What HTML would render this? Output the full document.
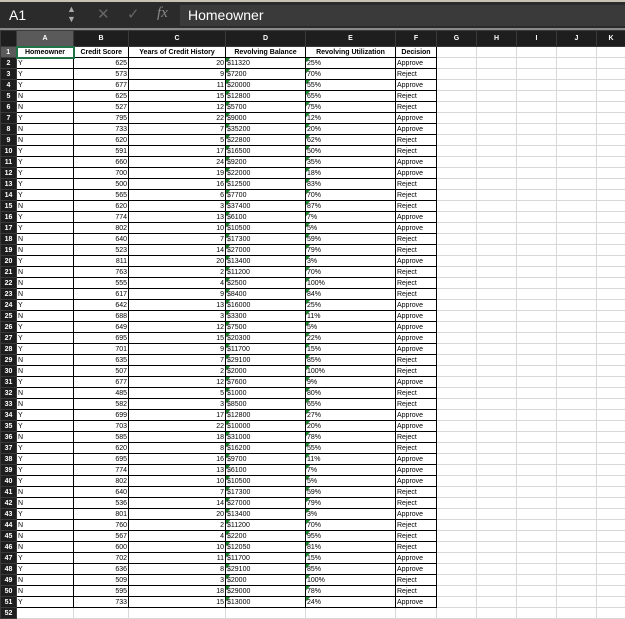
<!DOCTYPE html>
<html><head><meta charset="utf-8"><style>
*{margin:0;padding:0;box-sizing:border-box}
body{width:625px;height:619px;overflow:hidden;background:#fff;font-family:"Liberation Sans",sans-serif;position:relative}
#bar{position:absolute;left:0;top:0;width:625px;height:30px;background:#2b2b2b;border-top:2px solid #c9c3b3;border-bottom:2px solid #8a8a8a}
#nm{position:absolute;left:9px;top:5px;color:#fff;font-size:14px}
#fx{position:absolute;left:180px;top:3px;width:445px;height:21px;background:#3a3a3a;color:#fff;font-size:14px;padding:2px 8px}
.ic{position:absolute;top:3px;color:#666;font-size:15px}
table{position:absolute;left:0;top:30px;border-collapse:collapse;table-layout:fixed;width:625px}
td,th{font-size:7px;line-height:9px;height:11px;padding:0 1px;white-space:nowrap;overflow:hidden;border:1px solid #000;color:#000}
th{background:#1e1e1e;color:#fff;font-weight:bold;text-align:center;border:1px solid #3a3a3a}
tr.h th{height:16px}
td.r{text-align:right}
td.e{border:1px solid #d8d8d8}
td.g{background:linear-gradient(135deg,#1a8a2a 3px,transparent 3px) no-repeat;background-size:5px 5px}
tr.h1 td{text-align:center;font-weight:bold}
</style></head><body>
<div id="bar"><div id="nm">A1</div><div class="ic" style="left:67px;top:2px;font-size:9px;line-height:10px;color:#aaa">▲<br>▼</div><div class="ic" style="left:97px">✕</div><div class="ic" style="left:127px">✓</div><div class="ic" style="left:157px;font-family:'Liberation Serif';font-style:italic;color:#888">fx</div><div id="fx">Homeowner</div></div>
<table>
<colgroup><col style="width:16px"><col style="width:57px"><col style="width:55px"><col style="width:97px"><col style="width:80px"><col style="width:90px"><col style="width:41px"><col style="width:40px"><col style="width:40px"><col style="width:40px"><col style="width:40px"><col style="width:29px"></colgroup>
<tr class="h"><th></th><th style="background:#5a5a5a">A</th><th>B</th><th>C</th><th>D</th><th>E</th><th>F</th><th>G</th><th>H</th><th>I</th><th>J</th><th>K</th></tr>
<tr class="h1"><th style="background:#5a5a5a">1</th><td style="border:2px solid #217346">Homeowner</td><td>Credit Score</td><td>Years of Credit History</td><td>Revolving Balance</td><td>Revolving Utilization</td><td>Decision</td><td class="e"></td><td class="e"></td><td class="e"></td><td class="e"></td><td class="e"></td></tr>
<tr><th>2</th><td>Y</td><td class="r">625</td><td class="r">20</td><td class="g">$11320</td><td class="g">25%</td><td>Approve</td><td class="e"></td><td class="e"></td><td class="e"></td><td class="e"></td><td class="e"></td></tr>
<tr><th>3</th><td>Y</td><td class="r">573</td><td class="r">9</td><td class="g">$7200</td><td class="g">70%</td><td>Reject</td><td class="e"></td><td class="e"></td><td class="e"></td><td class="e"></td><td class="e"></td></tr>
<tr><th>4</th><td>Y</td><td class="r">677</td><td class="r">11</td><td class="g">$20000</td><td class="g">55%</td><td>Approve</td><td class="e"></td><td class="e"></td><td class="e"></td><td class="e"></td><td class="e"></td></tr>
<tr><th>5</th><td>N</td><td class="r">625</td><td class="r">15</td><td class="g">$12800</td><td class="g">65%</td><td>Reject</td><td class="e"></td><td class="e"></td><td class="e"></td><td class="e"></td><td class="e"></td></tr>
<tr><th>6</th><td>N</td><td class="r">527</td><td class="r">12</td><td class="g">$5700</td><td class="g">75%</td><td>Reject</td><td class="e"></td><td class="e"></td><td class="e"></td><td class="e"></td><td class="e"></td></tr>
<tr><th>7</th><td>Y</td><td class="r">795</td><td class="r">22</td><td class="g">$9000</td><td class="g">12%</td><td>Approve</td><td class="e"></td><td class="e"></td><td class="e"></td><td class="e"></td><td class="e"></td></tr>
<tr><th>8</th><td>N</td><td class="r">733</td><td class="r">7</td><td class="g">$35200</td><td class="g">20%</td><td>Approve</td><td class="e"></td><td class="e"></td><td class="e"></td><td class="e"></td><td class="e"></td></tr>
<tr><th>9</th><td>N</td><td class="r">620</td><td class="r">5</td><td class="g">$22800</td><td class="g">62%</td><td>Reject</td><td class="e"></td><td class="e"></td><td class="e"></td><td class="e"></td><td class="e"></td></tr>
<tr><th>10</th><td>Y</td><td class="r">591</td><td class="r">17</td><td class="g">$16500</td><td class="g">50%</td><td>Reject</td><td class="e"></td><td class="e"></td><td class="e"></td><td class="e"></td><td class="e"></td></tr>
<tr><th>11</th><td>Y</td><td class="r">660</td><td class="r">24</td><td class="g">$9200</td><td class="g">35%</td><td>Approve</td><td class="e"></td><td class="e"></td><td class="e"></td><td class="e"></td><td class="e"></td></tr>
<tr><th>12</th><td>Y</td><td class="r">700</td><td class="r">19</td><td class="g">$22000</td><td class="g">18%</td><td>Approve</td><td class="e"></td><td class="e"></td><td class="e"></td><td class="e"></td><td class="e"></td></tr>
<tr><th>13</th><td>Y</td><td class="r">500</td><td class="r">16</td><td class="g">$12500</td><td class="g">83%</td><td>Reject</td><td class="e"></td><td class="e"></td><td class="e"></td><td class="e"></td><td class="e"></td></tr>
<tr><th>14</th><td>Y</td><td class="r">565</td><td class="r">6</td><td class="g">$7700</td><td class="g">70%</td><td>Reject</td><td class="e"></td><td class="e"></td><td class="e"></td><td class="e"></td><td class="e"></td></tr>
<tr><th>15</th><td>N</td><td class="r">620</td><td class="r">3</td><td class="g">$37400</td><td class="g">87%</td><td>Reject</td><td class="e"></td><td class="e"></td><td class="e"></td><td class="e"></td><td class="e"></td></tr>
<tr><th>16</th><td>Y</td><td class="r">774</td><td class="r">13</td><td class="g">$6100</td><td class="g">7%</td><td>Approve</td><td class="e"></td><td class="e"></td><td class="e"></td><td class="e"></td><td class="e"></td></tr>
<tr><th>17</th><td>Y</td><td class="r">802</td><td class="r">10</td><td class="g">$10500</td><td class="g">5%</td><td>Approve</td><td class="e"></td><td class="e"></td><td class="e"></td><td class="e"></td><td class="e"></td></tr>
<tr><th>18</th><td>N</td><td class="r">640</td><td class="r">7</td><td class="g">$17300</td><td class="g">59%</td><td>Reject</td><td class="e"></td><td class="e"></td><td class="e"></td><td class="e"></td><td class="e"></td></tr>
<tr><th>19</th><td>N</td><td class="r">523</td><td class="r">14</td><td class="g">$27000</td><td class="g">79%</td><td>Reject</td><td class="e"></td><td class="e"></td><td class="e"></td><td class="e"></td><td class="e"></td></tr>
<tr><th>20</th><td>Y</td><td class="r">811</td><td class="r">20</td><td class="g">$13400</td><td class="g">3%</td><td>Approve</td><td class="e"></td><td class="e"></td><td class="e"></td><td class="e"></td><td class="e"></td></tr>
<tr><th>21</th><td>N</td><td class="r">763</td><td class="r">2</td><td class="g">$11200</td><td class="g">70%</td><td>Reject</td><td class="e"></td><td class="e"></td><td class="e"></td><td class="e"></td><td class="e"></td></tr>
<tr><th>22</th><td>N</td><td class="r">555</td><td class="r">4</td><td class="g">$2500</td><td class="g">100%</td><td>Reject</td><td class="e"></td><td class="e"></td><td class="e"></td><td class="e"></td><td class="e"></td></tr>
<tr><th>23</th><td>N</td><td class="r">617</td><td class="r">9</td><td class="g">$8400</td><td class="g">84%</td><td>Reject</td><td class="e"></td><td class="e"></td><td class="e"></td><td class="e"></td><td class="e"></td></tr>
<tr><th>24</th><td>Y</td><td class="r">642</td><td class="r">13</td><td class="g">$16000</td><td class="g">25%</td><td>Approve</td><td class="e"></td><td class="e"></td><td class="e"></td><td class="e"></td><td class="e"></td></tr>
<tr><th>25</th><td>N</td><td class="r">688</td><td class="r">3</td><td class="g">$3300</td><td class="g">11%</td><td>Approve</td><td class="e"></td><td class="e"></td><td class="e"></td><td class="e"></td><td class="e"></td></tr>
<tr><th>26</th><td>Y</td><td class="r">649</td><td class="r">12</td><td class="g">$7500</td><td class="g">5%</td><td>Approve</td><td class="e"></td><td class="e"></td><td class="e"></td><td class="e"></td><td class="e"></td></tr>
<tr><th>27</th><td>Y</td><td class="r">695</td><td class="r">15</td><td class="g">$20300</td><td class="g">22%</td><td>Approve</td><td class="e"></td><td class="e"></td><td class="e"></td><td class="e"></td><td class="e"></td></tr>
<tr><th>28</th><td>Y</td><td class="r">701</td><td class="r">9</td><td class="g">$11700</td><td class="g">15%</td><td>Approve</td><td class="e"></td><td class="e"></td><td class="e"></td><td class="e"></td><td class="e"></td></tr>
<tr><th>29</th><td>N</td><td class="r">635</td><td class="r">7</td><td class="g">$29100</td><td class="g">85%</td><td>Reject</td><td class="e"></td><td class="e"></td><td class="e"></td><td class="e"></td><td class="e"></td></tr>
<tr><th>30</th><td>N</td><td class="r">507</td><td class="r">2</td><td class="g">$2000</td><td class="g">100%</td><td>Reject</td><td class="e"></td><td class="e"></td><td class="e"></td><td class="e"></td><td class="e"></td></tr>
<tr><th>31</th><td>Y</td><td class="r">677</td><td class="r">12</td><td class="g">$7600</td><td class="g">9%</td><td>Approve</td><td class="e"></td><td class="e"></td><td class="e"></td><td class="e"></td><td class="e"></td></tr>
<tr><th>32</th><td>N</td><td class="r">485</td><td class="r">5</td><td class="g">$1000</td><td class="g">80%</td><td>Reject</td><td class="e"></td><td class="e"></td><td class="e"></td><td class="e"></td><td class="e"></td></tr>
<tr><th>33</th><td>N</td><td class="r">582</td><td class="r">3</td><td class="g">$8500</td><td class="g">65%</td><td>Reject</td><td class="e"></td><td class="e"></td><td class="e"></td><td class="e"></td><td class="e"></td></tr>
<tr><th>34</th><td>Y</td><td class="r">699</td><td class="r">17</td><td class="g">$12800</td><td class="g">27%</td><td>Approve</td><td class="e"></td><td class="e"></td><td class="e"></td><td class="e"></td><td class="e"></td></tr>
<tr><th>35</th><td>Y</td><td class="r">703</td><td class="r">22</td><td class="g">$10000</td><td class="g">20%</td><td>Approve</td><td class="e"></td><td class="e"></td><td class="e"></td><td class="e"></td><td class="e"></td></tr>
<tr><th>36</th><td>N</td><td class="r">585</td><td class="r">18</td><td class="g">$31000</td><td class="g">78%</td><td>Reject</td><td class="e"></td><td class="e"></td><td class="e"></td><td class="e"></td><td class="e"></td></tr>
<tr><th>37</th><td>Y</td><td class="r">620</td><td class="r">8</td><td class="g">$16200</td><td class="g">55%</td><td>Reject</td><td class="e"></td><td class="e"></td><td class="e"></td><td class="e"></td><td class="e"></td></tr>
<tr><th>38</th><td>Y</td><td class="r">695</td><td class="r">16</td><td class="g">$9700</td><td class="g">11%</td><td>Approve</td><td class="e"></td><td class="e"></td><td class="e"></td><td class="e"></td><td class="e"></td></tr>
<tr><th>39</th><td>Y</td><td class="r">774</td><td class="r">13</td><td class="g">$6100</td><td class="g">7%</td><td>Approve</td><td class="e"></td><td class="e"></td><td class="e"></td><td class="e"></td><td class="e"></td></tr>
<tr><th>40</th><td>Y</td><td class="r">802</td><td class="r">10</td><td class="g">$10500</td><td class="g">5%</td><td>Approve</td><td class="e"></td><td class="e"></td><td class="e"></td><td class="e"></td><td class="e"></td></tr>
<tr><th>41</th><td>N</td><td class="r">640</td><td class="r">7</td><td class="g">$17300</td><td class="g">59%</td><td>Reject</td><td class="e"></td><td class="e"></td><td class="e"></td><td class="e"></td><td class="e"></td></tr>
<tr><th>42</th><td>N</td><td class="r">536</td><td class="r">14</td><td class="g">$27000</td><td class="g">79%</td><td>Reject</td><td class="e"></td><td class="e"></td><td class="e"></td><td class="e"></td><td class="e"></td></tr>
<tr><th>43</th><td>Y</td><td class="r">801</td><td class="r">20</td><td class="g">$13400</td><td class="g">3%</td><td>Approve</td><td class="e"></td><td class="e"></td><td class="e"></td><td class="e"></td><td class="e"></td></tr>
<tr><th>44</th><td>N</td><td class="r">760</td><td class="r">2</td><td class="g">$11200</td><td class="g">70%</td><td>Reject</td><td class="e"></td><td class="e"></td><td class="e"></td><td class="e"></td><td class="e"></td></tr>
<tr><th>45</th><td>N</td><td class="r">567</td><td class="r">4</td><td class="g">$2200</td><td class="g">95%</td><td>Reject</td><td class="e"></td><td class="e"></td><td class="e"></td><td class="e"></td><td class="e"></td></tr>
<tr><th>46</th><td>N</td><td class="r">600</td><td class="r">10</td><td class="g">$12050</td><td class="g">81%</td><td>Reject</td><td class="e"></td><td class="e"></td><td class="e"></td><td class="e"></td><td class="e"></td></tr>
<tr><th>47</th><td>Y</td><td class="r">702</td><td class="r">11</td><td class="g">$11700</td><td class="g">15%</td><td>Approve</td><td class="e"></td><td class="e"></td><td class="e"></td><td class="e"></td><td class="e"></td></tr>
<tr><th>48</th><td>Y</td><td class="r">636</td><td class="r">8</td><td class="g">$29100</td><td class="g">85%</td><td>Approve</td><td class="e"></td><td class="e"></td><td class="e"></td><td class="e"></td><td class="e"></td></tr>
<tr><th>49</th><td>N</td><td class="r">509</td><td class="r">3</td><td class="g">$2000</td><td class="g">100%</td><td>Reject</td><td class="e"></td><td class="e"></td><td class="e"></td><td class="e"></td><td class="e"></td></tr>
<tr><th>50</th><td>N</td><td class="r">595</td><td class="r">18</td><td class="g">$29000</td><td class="g">78%</td><td>Reject</td><td class="e"></td><td class="e"></td><td class="e"></td><td class="e"></td><td class="e"></td></tr>
<tr><th>51</th><td>Y</td><td class="r">733</td><td class="r">15</td><td class="g">$13000</td><td class="g">24%</td><td>Approve</td><td class="e"></td><td class="e"></td><td class="e"></td><td class="e"></td><td class="e"></td></tr>
<tr><th>52</th><td class="e"></td><td class="e"></td><td class="e"></td><td class="e"></td><td class="e"></td><td class="e"></td><td class="e"></td><td class="e"></td><td class="e"></td><td class="e"></td><td class="e"></td></tr>
</table>
</body></html>
